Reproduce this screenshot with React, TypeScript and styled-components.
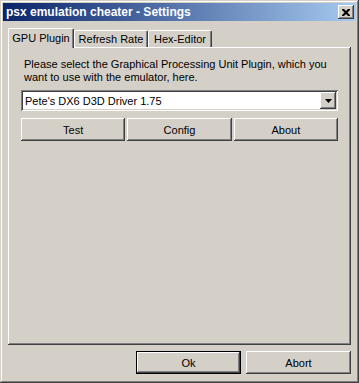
import styled, { createGlobalStyle } from "styled-components"

const face = '#d4d0c8'

const GlobalStyle = createGlobalStyle({
    'html, body': {
        margin: 0,
        padding: 0,
        background: face,
    },
    '*': {
        boxSizing: 'border-box',
    },
})

const raised = `inset -1px -1px #404040, inset 1px 1px #ffffff, inset -2px -2px #808080, inset 2px 2px ${face}`

const Window = styled.div({
    width: 359,
    height: 383,
    display: 'flex',
    flexDirection: 'column',
    padding: 3,
    background: face,
    boxShadow: `inset -1px -1px #404040, inset 1px 1px ${face}, inset -2px -2px #808080, inset 2px 2px #ffffff`,
    fontFamily: '"Liberation Sans", Arial, sans-serif',
    fontSize: 11,
    color: '#000',
})

const TitleBar = styled.div({
    height: 18,
    display: 'flex',
    alignItems: 'center',
    justifyContent: 'space-between',
    padding: '0 2px 0 2px',
    background: 'linear-gradient(to right, #0a246a, #a6caf0)',
})

const Title = styled.span({
    color: '#fff',
    fontWeight: 700,
    fontSize: 12,
    paddingLeft: 1,
})

const CloseButton = styled.div({
    width: 16,
    height: 14,
    display: 'flex',
    alignItems: 'center',
    justifyContent: 'center',
    background: face,
    boxShadow: raised,
})

const Body = styled.div({
    flex: 1,
    display: 'flex',
    flexDirection: 'column',
    padding: '7px 5px 6px 5px',
})

const TabRow = styled.div({
    display: 'flex',
    alignItems: 'flex-end',
    height: 19,
    position: 'relative',
    zIndex: 1,
})

const Tab = styled.div((props: { active?: boolean; w: number }) => ({
    width: props.w,
    height: props.active ? 20 : 17,
    marginBottom: props.active ? -1 : 0,
    display: 'flex',
    alignItems: 'center',
    justifyContent: 'center',
    paddingBottom: props.active ? 2 : 0,
    background: face,
    borderTop: '1px solid #fff',
    borderLeft: '1px solid #fff',
    borderRight: '1px solid #404040',
    borderRadius: '2px 2px 0 0',
    boxShadow: 'inset -1px 0 #808080',
    whiteSpace: 'nowrap',
}))

const Panel = styled.div({
    flex: 1,
    display: 'flex',
    flexDirection: 'column',
    padding: '11px 13px 0 13px',
    background: face,
    boxShadow: `inset -1px -1px #404040, inset 1px 1px #ffffff, inset -2px -2px #808080`,
})

const Label = styled.p({
    margin: '0 0 0 3px',
    lineHeight: '13px',
    whiteSpace: 'nowrap',
})

const Combo = styled.div({
    marginTop: 6,
    height: 21,
    display: 'flex',
    alignItems: 'center',
    padding: 2,
    background: '#fff',
    boxShadow: `inset 1px 1px #808080, inset -1px -1px #ffffff, inset 2px 2px #404040, inset -2px -2px ${face}`,
})

const ComboText = styled.span({
    flex: 1,
    paddingLeft: 2,
})

const ComboArrow = styled.div({
    width: 16,
    height: 17,
    display: 'flex',
    alignItems: 'center',
    justifyContent: 'center',
    background: face,
    boxShadow: raised,
})

const ButtonRow = styled.div({
    marginTop: 7,
    display: 'grid',
    gridTemplateColumns: '1fr 1fr 1fr',
    gap: 2,
})

const Button = styled.div((props: { isDefault?: boolean; w?: number }) => ({
    width: props.w,
    height: 23,
    display: 'flex',
    alignItems: 'center',
    justifyContent: 'center',
    background: face,
    border: props.isDefault ? '1px solid #000' : 'none',
    boxShadow: raised,
}))

const Footer = styled.div({
    marginTop: 6,
    display: 'flex',
    justifyContent: 'flex-end',
    gap: 5,
})

function App(): JSX.Element {
    return (
        <>
            <GlobalStyle />
            <Window>
                <TitleBar>
                    <Title>psx emulation cheater - Settings</Title>
                    <CloseButton>
                        <svg width="8" height="7" viewBox="0 0 8 7">
                            <path d="M0 0h2l2 2 2-2h2v1l-2.5 2.5L8 6v1H6L4 5 2 7H0V6l2.5-2.5L0 1z" fill="#000" />
                        </svg>
                    </CloseButton>
                </TitleBar>
                <Body>
                    <TabRow>
                        <Tab active w={66}>GPU Plugin</Tab>
                        <Tab w={74}>Refresh Rate</Tab>
                        <Tab w={64}>Hex-Editor</Tab>
                    </TabRow>
                    <Panel>
                        <Label>
                            Please select the Graphical Processing Unit Plugin, which you
                            <br />
                            want to use with the emulator, here.
                        </Label>
                        <Combo>
                            <ComboText>Pete's DX6 D3D Driver 1.75</ComboText>
                            <ComboArrow>
                                <svg width="7" height="4" viewBox="0 0 7 4">
                                    <path d="M0 0h7L3.5 4z" fill="#000" />
                                </svg>
                            </ComboArrow>
                        </Combo>
                        <ButtonRow>
                            <Button>Test</Button>
                            <Button>Config</Button>
                            <Button>About</Button>
                        </ButtonRow>
                    </Panel>
                    <Footer>
                        <Button isDefault w={105}>Ok</Button>
                        <Button w={105}>Abort</Button>
                    </Footer>
                </Body>
            </Window>
        </>
    )
}

export default App
